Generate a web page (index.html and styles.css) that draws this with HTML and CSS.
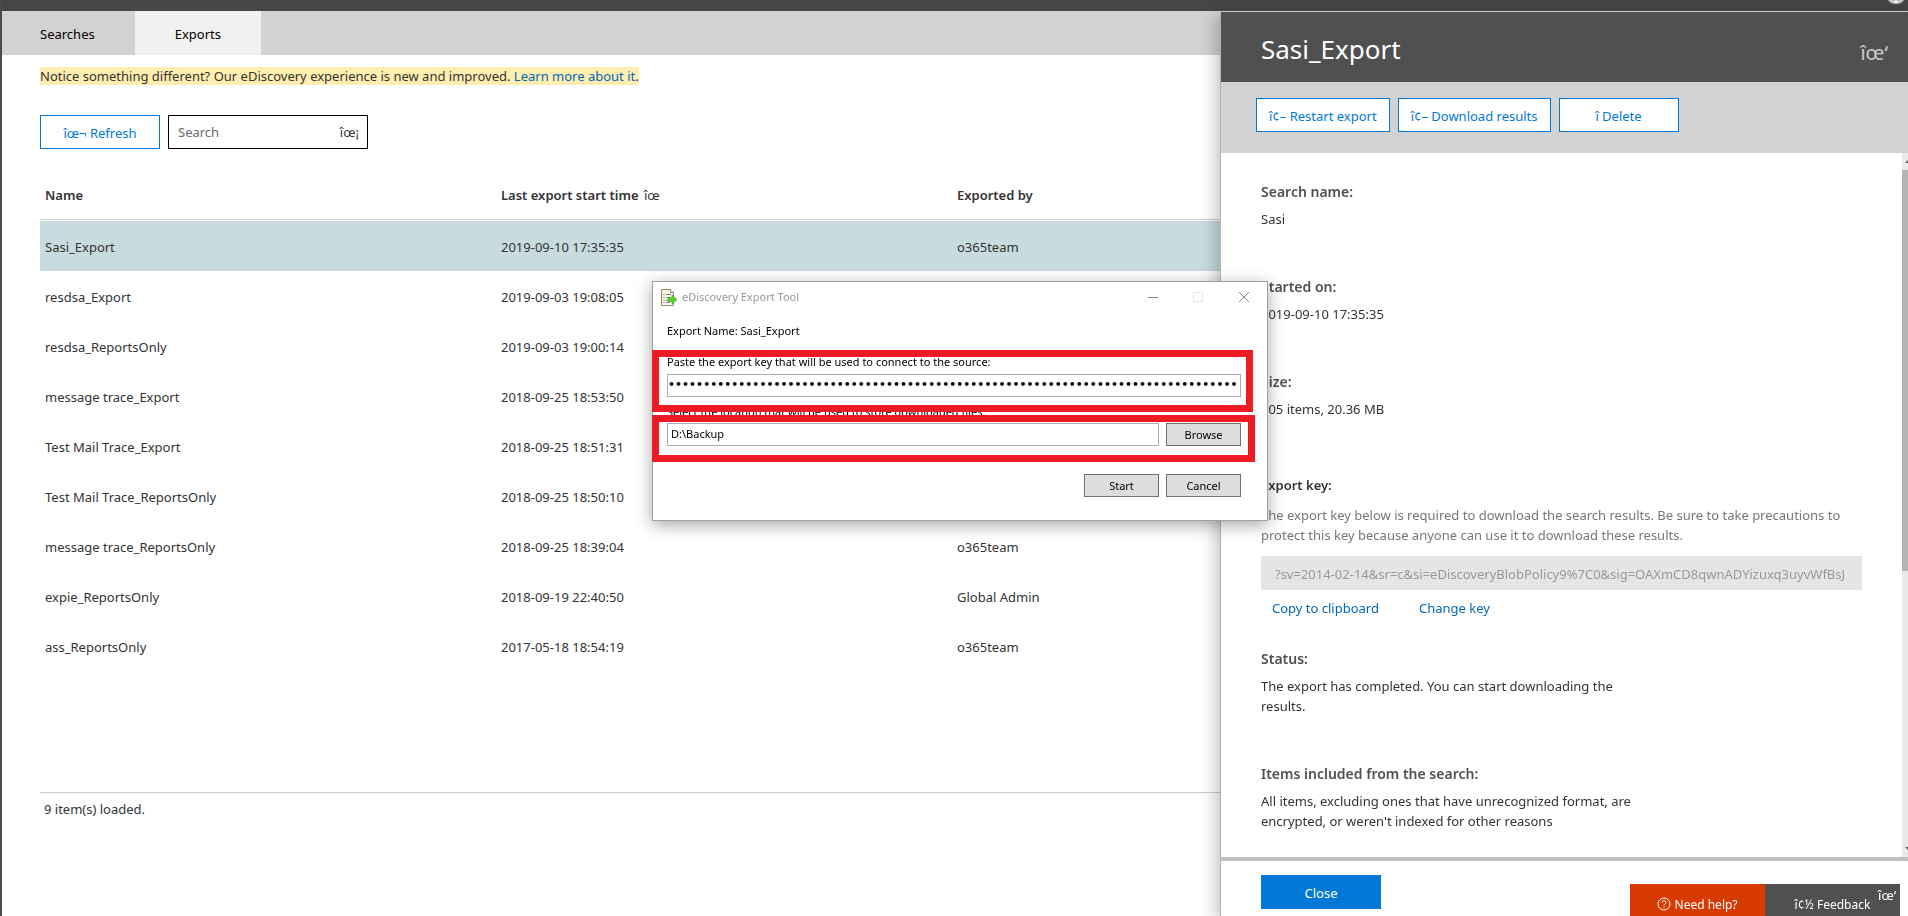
FILE: index.html
```
<!doctype html>
<html lang="en">
  <head>
    <meta charset="utf-8">
    <title>eDiscovery - Exports</title>
    <link rel="stylesheet" href="styles.css">
  </head>
  <body>
    <header class="topbar">
      <svg class="avatar" width="16" height="4" viewBox="0 0 16 4">
        <path d="M0 0h16c-2 3-5 4-8 4s-6-1-8-4z" fill="#c4c4c4" />
        <path d="M5 1h6l-3 2z" fill="#fff" />
      </svg>
    </header>

    <nav class="tabs">
      <a href="#searches" class="tab">Searches</a>
      <a href="#exports" class="tab active">Exports</a>
    </nav>

    <main class="content">
      <p class="notice">
        <mark>Notice something different? Our eDiscovery experience is new and improved. <a href="#learn">Learn more about it</a>.</mark>
      </p>

      <div class="toolbar">
        <button class="btn">îœ¬ Refresh</button>
        <label class="search">
          <input type="text" placeholder="Search" aria-label="Search" />
          <span>îœ¡</span>
        </label>
      </div>

      <table class="exports">
        <thead>
          <tr>
            <th>Name</th>
            <th>Last export start time <span class="sort">îœ</span></th>
            <th>Exported by</th>
            <th></th>
          </tr>
        </thead>
        <tbody>
          <tr class="selected"><td>Sasi_Export</td><td>2019-09-10 17:35:35</td><td>o365team</td><td></td></tr>
          <tr><td>resdsa_Export</td><td>2019-09-03 19:08:05</td><td></td><td></td></tr>
          <tr><td>resdsa_ReportsOnly</td><td>2019-09-03 19:00:14</td><td></td><td></td></tr>
          <tr><td>message trace_Export</td><td>2018-09-25 18:53:50</td><td></td><td></td></tr>
          <tr><td>Test Mail Trace_Export</td><td>2018-09-25 18:51:31</td><td></td><td></td></tr>
          <tr><td>Test Mail Trace_ReportsOnly</td><td>2018-09-25 18:50:10</td><td></td><td></td></tr>
          <tr><td>message trace_ReportsOnly</td><td>2018-09-25 18:39:04</td><td>o365team</td><td></td></tr>
          <tr><td>expie_ReportsOnly</td><td>2018-09-19 22:40:50</td><td>Global Admin</td><td></td></tr>
          <tr><td>ass_ReportsOnly</td><td>2017-05-18 18:54:19</td><td>o365team</td><td></td></tr>
        </tbody>
      </table>

      <footer class="count">9 item(s) loaded.</footer>
    </main>

    <aside class="panel">
      <div class="panel-header">
        <h1>Sasi_Export</h1>
        <button class="panel-close">îœ‘</button>
      </div>
      <div class="panel-actions">
        <button class="btn">î¢– Restart export</button>
        <button class="btn">î¢– Download results</button>
        <button class="btn">î Delete</button>
      </div>

      <div class="panel-main">
        <div class="panel-body">
          <section class="field">
            <h2>Search name:</h2>
            <p>Sasi</p>
          </section>
          <section class="field">
            <h2>Started on:</h2>
            <p>2019-09-10 17:35:35</p>
          </section>
          <section class="field size">
            <h2>Size:</h2>
            <p>405 items, 20.36 MB</p>
          </section>
          <section class="field key">
            <h2><label for="exportKey">Export key:</label></h2>
            <p>
              The export key below is required to download the search results. Be sure to take precautions to<br>
              protect this key because anyone can use it to download these results.
            </p>
            <input type="text" id="exportKey" disabled value="?sv=2014-02-14&amp;sr=c&amp;si=eDiscoveryBlobPolicy9%7C0&amp;sig=OAXmCD8qwnADYizuxq3uyvWfBsJ" />
            <div class="key-links">
              <a href="#copy">Copy to clipboard</a>
              <a href="#change">Change key</a>
            </div>
          </section>
          <section class="field">
            <h2>Status:</h2>
            <p>The export has completed. You can start downloading the<br>results.</p>
          </section>
          <section class="field">
            <h2>Items included from the search:</h2>
            <p>All items, excluding ones that have unrecognized format, are<br>encrypted, or weren't indexed for other reasons</p>
          </section>
        </div>
        <div class="scrollbar">
          <svg width="6" height="17" viewBox="0 0 6 17"><path d="M6 7l-3 3h3z" fill="#606060" /></svg>
          <div class="thumb"></div>
          <svg width="6" height="17" viewBox="0 0 6 17"><path d="M3 7h3v3z" fill="#606060" /></svg>
        </div>
      </div>

      <div class="panel-footer">
        <button class="btn primary">Close</button>
        <div class="support">
          <button class="help">
            <svg width="14" height="14" viewBox="0 0 14 14" fill="none" stroke="#fff">
              <circle cx="7" cy="7" r="6" />
              <path d="M5 5.6c0-1.2.9-2 2-2s2 .8 2 1.9c0 1.4-2 1.5-2 3M7 9.6v1.2" />
            </svg>
            Need help?
          </button>
          <button class="feedback">î¢½ Feedback</button>
          <span class="dismiss">îœ‘</span>
        </div>
      </div>
    </aside>

    <div class="dialog" role="dialog" aria-labelledby="dialogTitle">
      <div class="titlebar">
        <svg width="16" height="17" viewBox="0 0 16 17">
          <path d="M.5.5h9l3 3v13H.5z" fill="#fbf9e6" stroke="#8c8a78" />
          <path d="M9.5.5v3h3" fill="#fff" stroke="#8c8a78" />
          <path d="M2.500 5.500h1M2.500 8.500h1M2.500 11.500h1M2.500 13.500h1" stroke="#555" />
          <path d="M5 5.500h5M5 8.500h4M5 11.500h3M5 13.500h4" stroke="#888" />
          <path d="M7 8.500h4V6l5 4.500-5 4.500v-2.500H7z" fill="#5fd02e" stroke="#36a01c" stroke-width=".6" />
        </svg>
        <span id="dialogTitle" class="title">eDiscovery Export Tool</span>
        <svg class="window-buttons" width="102" height="12" viewBox="0 0 102 12" fill="none">
          <path d="M0 6.500h10" stroke="#888" />
          <path d="M45.500 1.500h9v9h-9z" stroke="#e4e4e4" />
          <path d="M91 1l10 10M101 1L91 11" stroke="#888" />
        </svg>
      </div>
      <p class="export-name">Export Name: Sasi_Export</p>
      <label for="pasteKey">Paste the export key that will be used to connect to the source:</label>
      <input type="password" id="pasteKey" value="sv20140214srcsieDiscoveryBlobPolicy97C0sigOAXmCD8qwnADYizuxq3uyvWfBsJsv2014021401234567890" />
      <label for="location">Select the location that will be used to store downloaded files:</label>
      <div class="row">
        <input type="text" id="location" value="D:\Backup" />
        <button>Browse</button>
      </div>
      <div class="row buttons">
        <button>Start</button>
        <button>Cancel</button>
      </div>
      <div class="highlight highlight-key"></div>
      <div class="highlight highlight-location"></div>
    </div>
  </body>
</html>
```
FILE: styles.css
```
:root {
  --text: #333333;
  --text-secondary: #777777;
  --blue: #0078d7;
  --link: #0067b8;
  --dark: #505050;
  --bar: #d2d2d2;
  --border: #cccccc;
  --selected: #c8dbdf;
  --red: #ed1c24;
}

* {
  box-sizing: border-box;
}

body {
  margin: 0;
  min-height: 100vh;
  border-left: 2px solid #4a4a4a;
  font-family: 'Noto Sans', 'Open Sans', sans-serif;
  font-size: 13px;
  line-height: 20px;
  color: var(--text);
  background: #ffffff;
  overflow: hidden;
}

h1,
h2,
p {
  margin: 0;
}

a {
  color: var(--link);
  text-decoration: none;
}

button,
input {
  font: inherit;
}

.topbar {
  display: flex;
  justify-content: flex-end;
  height: 11px;
  padding-right: 4px;
  background: #484644;
}

.tabs {
  display: flex;
  height: 44px;
  background: var(--bar);
}

.tab {
  padding: 13px 40px;
  color: #000000;
}

.tab:first-child {
  padding-left: 38px;
}

.tab.active {
  background: #f1f1f1;
}

.content {
  padding: 11px 44px 0 38px;
}

.notice mark {
  color: inherit;
  background: #ffeeb0;
}

.toolbar {
  display: flex;
  gap: 8px;
  margin-top: 29px;
}

.btn {
  min-width: 120px;
  height: 34px;
  padding: 1px 12px 0;
  border: 1px solid var(--blue);
  background: #ffffff;
  color: var(--blue);
}

.btn.primary {
  background: var(--blue);
  color: #ffffff;
}

.search {
  display: flex;
  align-items: center;
  width: 200px;
  height: 34px;
  padding: 0 8px 0 9px;
  border: 1px solid #000000;
}

.search input {
  flex: 1;
  min-width: 0;
  padding: 0;
  border: none;
  outline: none;
}

.search input::placeholder {
  color: #6a6a6a;
}

.exports {
  width: 100%;
  margin-top: 21px;
  table-layout: fixed;
  border-collapse: separate;
  border-spacing: 0;
  text-align: left;
}

.exports th {
  height: 50px;
  padding: 0 5px;
  border-bottom: 1px solid var(--border);
  font-weight: 600;
}

.exports .sort {
  margin-left: 2px;
  font-weight: 400;
}

.exports td {
  height: 50px;
  padding: 2px 5px 0;
}

.exports .selected td {
  height: 51px;
  border-top: 1px solid #ffffff;
  background: var(--selected);
}

.count {
  margin-top: 121px;
  padding: 6px 4px;
  border-top: 1px solid var(--border);
}

/* details flyout */
.panel {
  position: fixed;
  top: 11px;
  right: 0;
  bottom: 0;
  display: flex;
  flex-direction: column;
  width: 688px;
  border-top: 1px solid var(--border);
  border-left: 1px solid #b4b4b4;
  background: #ffffff;
  box-shadow: -4px 4px 16px rgba(0, 0, 0, 0.25);
}

.panel-header {
  display: flex;
  align-items: center;
  justify-content: space-between;
  height: 70px;
  padding: 4px 20px 0 40px;
  background: var(--dark);
  color: #ffffff;
}

.panel-header h1 {
  font-size: 26px;
  font-weight: 400;
  line-height: 36px;
}

.panel-close {
  padding: 8px 0 0;
  border: none;
  background: none;
  color: #c8c8c8;
  font-size: 20px;
}

.panel-actions {
  display: flex;
  gap: 8px;
  height: 71px;
  padding: 16px 35px;
  background: var(--bar);
}

.panel-main {
  display: flex;
  flex: 1;
  min-height: 0;
}

.panel-body {
  flex: 1;
  padding: 27px 40px 0;
  overflow: hidden;
}

.field {
  margin-bottom: 46px;
}

.field h2 {
  margin-bottom: 5px;
  font-size: 14px;
  font-weight: 600;
  line-height: 24px;
  color: var(--dark);
}

.field.size {
  margin-bottom: 54px;
}

.field.key {
  margin-bottom: 29px;
}

.key h2 {
  font-size: 13px;
  margin-bottom: 8px;
  color: var(--text);
}

.key p {
  color: var(--text-secondary);
}

.key input {
  width: 100%;
  height: 34px;
  margin-top: 11px;
  padding: 1px 14px 0;
  border: none;
  background: #e5e5e5;
  color: #999999;
}

.key-links {
  display: flex;
  gap: 40px;
  margin-top: 8px;
  padding-left: 11px;
}

.scrollbar {
  display: flex;
  flex-direction: column;
  justify-content: space-between;
  width: 6px;
  background: #e9e9e9;
}

.scrollbar .thumb {
  height: 57%;
  margin-bottom: auto;
  background: #b4b4b4;
}

.panel-footer {
  display: flex;
  justify-content: space-between;
  height: 59px;
  padding: 14px 8px 0 40px;
  border-top: 4px solid #c0c0c0;
}

.support {
  position: relative;
  display: flex;
  margin-top: 9px;
  color: #ffffff;
}

.support button {
  width: 135px;
  padding: 9px 0 0;
  border: none;
  background: #d83b01;
  color: #ffffff;
  font-size: 12px;
}

.support svg {
  vertical-align: -2px;
}

.support .feedback {
  background: var(--dark);
}

.dismiss {
  position: absolute;
  top: 1px;
  right: 4px;
}

/* export tool window */
.dialog {
  position: fixed;
  top: 281px;
  left: calc(50% - 302px);
  width: 616px;
  height: 240px;
  padding: 0 26px 0 14px;
  border: 1px solid #a0a0a0;
  background: #ffffff;
  color: #000000;
  font-size: 11px;
  line-height: 16px;
  box-shadow: 0 4px 16px rgba(0, 0, 0, 0.35);
}

.titlebar {
  display: flex;
  align-items: center;
  height: 30px;
  margin: 0 -9px 0 -6px;
  color: #999999;
}

.titlebar .title {
  flex: 1;
  margin-left: 5px;
}

.export-name {
  margin: 11px 0 15px;
}

.dialog label {
  display: block;
}

.dialog input {
  display: block;
  width: 100%;
  height: 23px;
  padding: 0 3px 3px;
  border: 1px solid #abadb3;
  background: #ffffff;
  color: #000000;
}

.dialog input[type='password'] {
  margin: 4px 0 7px;
  padding: 0 3px 2px 0;
  font-family: 'DejaVu Sans', sans-serif;
  font-weight: 700;
}

.row {
  display: flex;
  gap: 7px;
  margin-top: 3px;
}

.row input {
  flex: 1;
}

.row button {
  width: 75px;
  height: 23px;
  padding: 0;
  border: 1px solid #707070;
  background: #dddddd;
  color: #000000;
}

.row.buttons {
  justify-content: flex-end;
  margin-top: 28px;
}

.highlight {
  position: absolute;
  left: -1px;
  border: 7px solid var(--red);
}

.highlight-key {
  top: 68px;
  width: 601px;
  height: 62px;
}

.highlight-location {
  top: 133px;
  width: 603px;
  height: 47px;
}
```
